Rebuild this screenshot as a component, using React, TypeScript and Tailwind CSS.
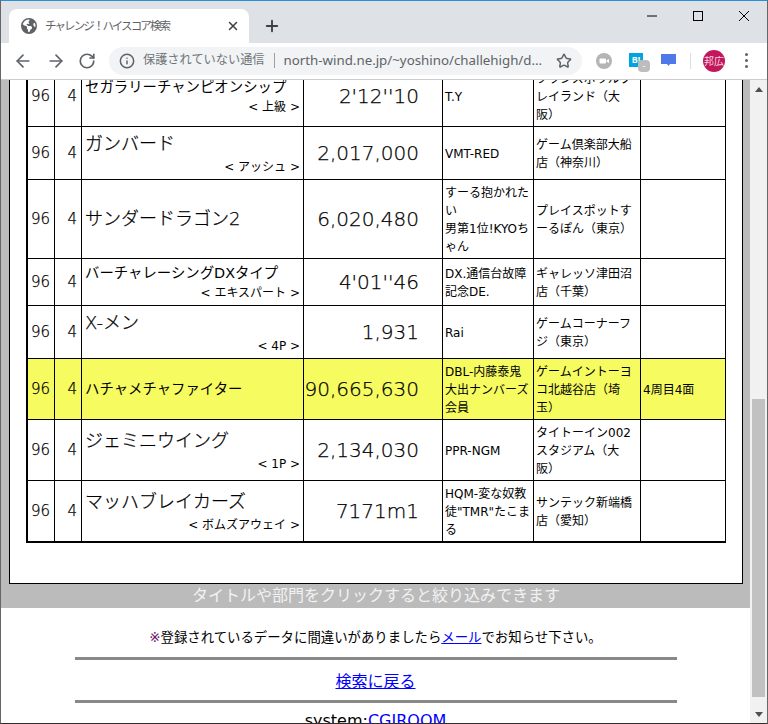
import { ArrowLeft, ArrowRight, Info, Plus, RotateCw, Star, X } from 'lucide-react';
import { FaEarthAmericas } from 'react-icons/fa6';

const rows = [
  { h: 'h-[61px]', title: 'セガラリーチャンピオンシップ', big: false, sub: '< 上級 >', score: "2'12''10", name: ['T.Y'], store: ['フランスボウルプ', 'レイランド（大', '阪）'] },
  { h: 'h-[53px]', title: 'ガンバード', big: true, sub: '< アッシュ >', score: '2,017,000', name: ['VMT-RED'], store: ['ゲーム倶楽部大船', '店（神奈川）'] },
  { h: 'h-[79px]', title: 'サンダードラゴン2', big: true, score: '6,020,480', name: ['すーる抱かれた', 'い', '男第1位!KYOち', 'ゃん'], store: ['プレイスポットす', 'ーるぽん（東京）'] },
  { h: 'h-[47px]', title: 'バーチャレーシングDXタイプ', big: false, sub: '< エキスパート >', score: "4'01''46", name: ['DX.通信台故障', '記念DE.'], store: ['ギャレッソ津田沼', '店（千葉）'] },
  { h: 'h-[53px]', title: 'X-メン', big: true, sub: '< 4P >', score: '1,931', name: ['Rai'], store: ['ゲームコーナーフ', 'ジ（東京）'] },
  { h: 'h-[61px]', title: 'ハチャメチャファイター', big: false, score: '90,665,630', name: ['DBL-内藤泰鬼', '大出ナンバーズ', '会員'], store: ['ゲームイントーヨ', 'コ北越谷店（埼', '玉）'], note: '4周目4面', hit: true },
  { h: 'h-[61px]', title: 'ジェミニウイング', big: true, sub: '< 1P >', score: '2,134,030', name: ['PPR-NGM'], store: ['タイトーイン002', 'スタジアム（大', '阪）'] },
  { h: 'h-[62px]', title: 'マッハブレイカーズ', big: true, sub: '< ボムズアウェイ >', score: '7171m1', name: ['HQM-変な奴教', '徒"TMR"たこま', 'る'], store: ['サンテック新端橋', '店（愛知）'], last: true },
];

function Lines({ items }: { items: string[] }) {
  return (
    <>
      {items.map((t, i) => (
        <div key={i} className="whitespace-nowrap text-xs leading-[18px]">{t}</div>
      ))}
    </>
  );
}

function ChromeBar() {
  return (
    <div className="text-[#5f6368] font-['Noto_Sans','Noto_Sans_CJK_JP',sans-serif]">
      <div className="h-px bg-[#2b8fd8]" />
      <div className="flex h-[42px] bg-[#dee1e6] pl-2">
        <div className="mt-2 flex h-[34px] w-[240px] items-center rounded-t-lg bg-white pl-3 pr-[9px]">
          <FaEarthAmericas className="h-4 w-4 shrink-0" />
          <span className="ml-2 flex-1 whitespace-nowrap text-[11.5px] tracking-[-1.9px]">チャレンジ！ハイスコア検索</span>
          <X className="h-3.5 w-3.5 text-[#3c4043]" strokeWidth={2.5} />
        </div>
        <Plus className="ml-[14px] mt-[16px] h-[18px] w-[18px] text-[#3c4043]" strokeWidth={2.5} />
        <div className="ml-auto flex gap-[34px] pr-[17px] pt-[9px] text-black">
          <svg className="h-3 w-3" viewBox="0 0 12 12"><path d="M1 6h10" stroke="currentColor" /></svg>
          <svg className="h-3 w-3" viewBox="0 0 12 12"><rect x="1.5" y="1.5" width="9" height="9" fill="none" stroke="currentColor" /></svg>
          <svg className="h-3 w-3" viewBox="0 0 12 12"><path d="M1 1l10 10M11 1L1 11" stroke="currentColor" /></svg>
        </div>
      </div>
      <div className="flex h-[37px] items-center border-b border-[#ccc] bg-white pb-px">
        <ArrowLeft className="ml-3 h-5 w-5" />
        <ArrowRight className="ml-[13px] h-5 w-5" />
        <RotateCw className="ml-3 h-[18px] w-[18px]" strokeWidth={2.25} />
        <div className="ml-[13px] flex h-7 w-[473px] items-center rounded-full bg-[#f1f3f4] pl-[10px]">
          <Info className="h-4 w-4" strokeWidth={2.25} />
          <span className="ml-2 whitespace-nowrap text-[12.2px] text-[#70757a]">保護されていない通信</span>
          <span className="mx-[9px] h-[15px] w-px bg-[#9aa0a6]" />
          <span className="whitespace-nowrap text-[13.3px] text-[#5f6368]">north-wind.ne.jp/~yoshino/challehigh/d...</span>
          <Star className="ml-auto mr-[10px] h-4 w-4" strokeWidth={2.25} />
        </div>
        <svg className="ml-[14px] h-4 w-4" viewBox="0 0 16 16">
          <circle cx="8" cy="8" r="8" fill="#b5b5b5" />
          <rect x="3.5" y="5.5" width="6.5" height="5" rx="1" fill="#fff" />
          <path d="M10.5 7.5l2.5-1.5v4l-2.5-1.5z" fill="#fff" />
        </svg>
        <div className="relative ml-[17px] h-[18px] w-[18px]">
          <div className="mt-px flex h-[14px] w-[14px] items-center justify-center bg-[#00a4de] text-[9px] font-bold leading-none text-white">B!</div>
          <div className="absolute left-[9px] top-[8px] flex h-3 w-3 items-center justify-center rounded-sm bg-[#bdbdbd] text-[9px] leading-none text-white">-</div>
        </div>
        <svg className="ml-[14px] h-[13px] w-[15px]" viewBox="0 0 15 13">
          <path d="M0 0h15v10H9l-1.5 2L6 10H0z" fill="#4f79e8" />
        </svg>
        <span className="ml-[14px] h-4 w-px bg-[#ddd]" />
        <div className="ml-[12px] flex h-[22px] w-[22px] items-center justify-center rounded-full bg-[#c2185b] text-[10px] leading-none text-[#f6d5e2]">邦広</div>
        <div className="ml-[20px] flex flex-col gap-[3px]">
          <span className="h-[3px] w-[3px] rounded-full bg-[#5f6368]" />
          <span className="h-[3px] w-[3px] rounded-full bg-[#5f6368]" />
          <span className="h-[3px] w-[3px] rounded-full bg-[#5f6368]" />
        </div>
      </div>
    </div>
  );
}

function ScoreTable() {
  const thin = 'font-light [-webkit-text-stroke:0.25px_black]';
  return (
    <table className="w-[700px] table-fixed border-separate border-spacing-0 text-black">
      <colgroup>
        <col className="w-[29px]" />
        <col className="w-[27px]" />
        <col className="w-[222px]" />
        <col className="w-[139px]" />
        <col className="w-[91px]" />
        <col className="w-[107px]" />
        <col className="w-[85px]" />
      </colgroup>
      <tbody>
        {rows.map((r, i) => {
          const line = r.last ? 'border-b-2 border-r border-black' : 'border-b border-r border-black';
          return (
            <tr key={i} className={`${r.h} ${r.hit ? 'bg-[#f6fb60]' : ''}`}>
              <td className={`${line} ${thin} border-l-2 pr-1 text-right text-[15px]`}>96</td>
              <td className={`${line} ${thin} pr-1 text-right text-[15px]`}>4</td>
              <td className={`${line} px-[3px]`}>
                <div className={r.big ? `${thin} mb-px whitespace-nowrap text-lg leading-[26px]` : 'whitespace-nowrap text-[14.4px] leading-[22px]'}>{r.title}</div>
                {r.sub && <div className="whitespace-nowrap text-right text-xs leading-[18px]">{r.sub}</div>}
              </td>
              <td className={`${line} ${thin} pb-px pr-[23px] text-right text-[20px]`}>{r.score}</td>
              <td className={`${line} pl-[2px] pt-[2px]`}><Lines items={r.name} /></td>
              <td className={`${line} pl-[2px] pt-[2px]`}><Lines items={r.store} /></td>
              <td className={`${line} pl-[2px] pt-[2px]`}>{r.note && <Lines items={[r.note]} />}</td>
            </tr>
          );
        })}
      </tbody>
    </table>
  );
}

export default function App() {
  return (
    <div className="flex h-[724px] w-[768px] flex-col overflow-hidden border-x border-b border-x-[#666] border-b-[#3a2a2a] bg-white font-['DejaVu_Sans','Noto_Sans_CJK_JP',sans-serif]">
      <ChromeBar />
      <div className="flex min-h-0 flex-1">
        <main className="w-[749px] overflow-hidden">
          <section className="bg-[#bbbbbb] pl-2 pr-[7px]">
            <div className="-mt-[14px] border border-t-0 border-black bg-white pb-[40px] pl-4">
              <ScoreTable />
            </div>
            <p className="h-6 text-center text-base leading-[24px] text-[#f2f2f2]">タイトルや部門をクリックすると絞り込みできます</p>
          </section>
          <p className="mt-5 text-center text-[13.4px] leading-[20px] text-black"><span className="text-[#70106a]">※</span>登録されているデータに間違いがありましたら<a href="#" className="text-[#0000ff] underline">メール</a>でお知らせ下さい。</p>
          <hr className="mx-auto mt-[9px] h-[3px] w-[602px] border-0 bg-[#888888]" />
          <p className="mt-[7px] text-center text-base leading-[30px]"><a href="#" className="text-[#0000ff] underline">検索に戻る</a></p>
          <hr className="mx-auto mt-[3px] h-[3px] w-[602px] border-0 bg-[#888888]" />
          <p className="mt-[6px] text-center text-base leading-[24px] text-black">system:<a href="#" className="text-[#0000ff] underline">CGIROOM</a></p>
        </main>
        <aside className="flex w-[17px] flex-col items-center bg-[#f1f1f1]">
          <svg className="mt-[7px] h-[5px] w-2" viewBox="0 0 8 5"><path d="M4 0L8 5H0z" fill="#505050" /></svg>
          <div className="mt-[307px] h-[298px] w-[13px] bg-[#c1c1c1]" />
          <svg className="mt-[15px] h-[5px] w-2" viewBox="0 0 8 5"><path d="M0 0h8L4 5z" fill="#505050" /></svg>
        </aside>
      </div>
    </div>
  );
}
